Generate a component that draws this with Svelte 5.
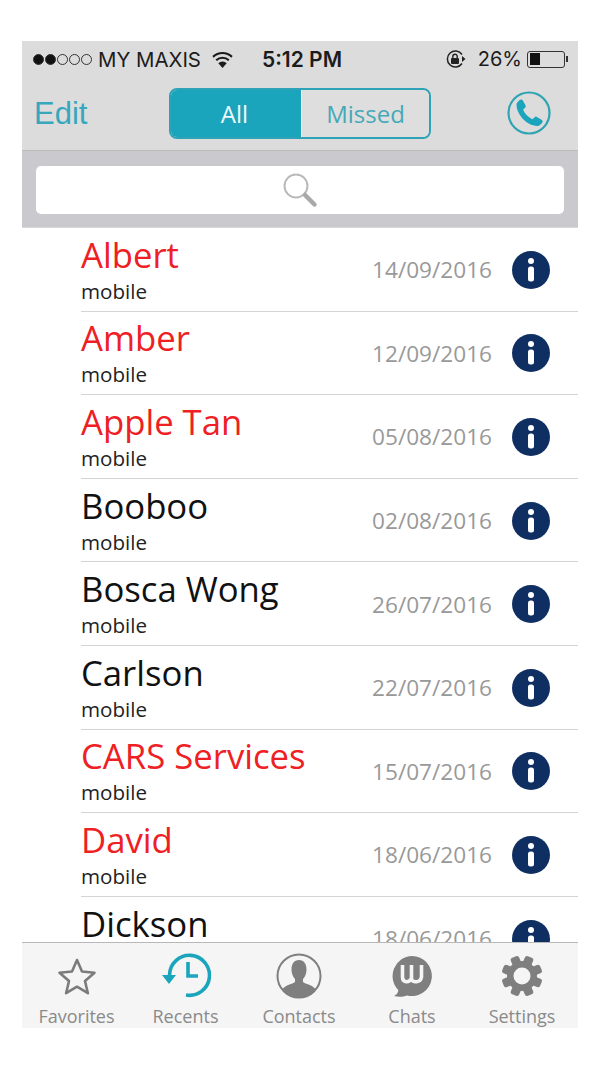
<script>
  const rows = [
    { name: 'Albert', date: '14/09/2016', missed: true },
    { name: 'Amber', date: '12/09/2016', missed: true },
    { name: 'Apple Tan', date: '05/08/2016', missed: true },
    { name: 'Booboo', date: '02/08/2016', missed: false },
    { name: 'Bosca Wong', date: '26/07/2016', missed: false },
    { name: 'Carlson', date: '22/07/2016', missed: false },
    { name: 'CARS Services', date: '15/07/2016', missed: true },
    { name: 'David', date: '18/06/2016', missed: true },
    { name: 'Dickson', date: '18/06/2016', missed: false }
  ];
  const teeth = [22.5, 67.5, 112.5, 157.5, 202.5, 247.5, 292.5, 337.5];
</script>

<div class="phone">
  <header class="nav">
    <div class="status">
      <span class="dots">
        <i class="on"></i><i class="on"></i><i></i><i></i><i></i>
      </span>
      <span class="carrier">MY MAXIS</span>
      <svg class="wifi" viewBox="0 0 20 16" width="21" height="17">
        <path d="M1 5.500a13 13 0 0 1 18 0M4 8.800a8.600 8.600 0 0 1 12 0" fill="none" stroke="#1c1c1c" stroke-width="2"/>
        <path d="M10 16l-4-4.400a5.600 5.600 0 0 1 8 0z" fill="#1c1c1c"/>
      </svg>
      <span class="time">5:12 PM</span>
      <span class="spacer"></span>
      <svg class="lock" viewBox="0 0 22 20" width="22" height="20">
        <path d="M17 5.500a8 8 0 1 0 0 9" fill="none" stroke="#222" stroke-width="1.500"/>
        <path d="M17 7l3.500 3-3.500 3z" fill="#222"/>
        <rect x="6" y="9" width="8" height="6" rx="1" fill="#222"/>
        <path d="M7.800 9V7.400a2.200 2.200 0 0 1 4.400 0V9" fill="none" stroke="#222" stroke-width="1.400"/>
      </svg>
      <span class="pct">26%</span>
      <span class="battery"><span class="level"></span></span>
      <span class="nub"></span>
    </div>
    <div class="bar">
      <span class="edit">Edit</span>
      <div class="segment">
        <span class="seg active">All</span>
        <span class="seg">Missed</span>
      </div>
      <svg class="call" viewBox="0 0 44 44" width="44" height="44">
        <circle cx="22" cy="22" r="20.500" fill="none" stroke="#2ea3b2" stroke-width="2.200"/>
        <path d="M9.500 13.500c0-1.500 3-5 4.500-5 1 0 1.600.5 2 1.300l2.600 4.700c.4 1 .2 1.700-.5 2.300l-2 1.700c1.500 4 5.500 8 9.500 9.700l2-2c.7-.7 1.500-.8 2.300-.3l4.700 2.800c.8.500 1.200 1.200 1 2-.5 1.800-3.500 4.300-5.300 4.300C19 34.500 9.500 23 9.500 13.500z" fill="#1aa5bd"/>
      </svg>
    </div>
  </header>

  <div class="search">
    <div class="field">
      <svg viewBox="0 0 36 36" width="36" height="36">
        <circle cx="14" cy="14" r="11.500" fill="none" stroke="#b9b9b9" stroke-width="2"/>
        <path d="M23 23l9.500 9.500" stroke="#a9a9a9" stroke-width="4.500" stroke-linecap="round"/>
      </svg>
    </div>
  </div>

  <div class="list">
    {#each rows as row}
      <div class="row">
        <div class="who">
          <div class="name" class:missed={row.missed}>{row.name}</div>
          <div class="kind">mobile</div>
        </div>
        <span class="date">{row.date}</span>
        <svg class="info" viewBox="0 0 38 38" width="38" height="38">
          <circle cx="19" cy="19" r="19" fill="#0f2f63"/>
          <circle cx="19" cy="10" r="3" fill="#fff"/>
          <rect x="16" y="15.500" width="6" height="15" rx="2.500" fill="#fff"/>
        </svg>
      </div>
    {/each}
  </div>

  <nav class="tabs">
    <div class="tab">
      <div class="icon">
        <svg viewBox="0 0 40 38" width="40" height="38">
          <path d="M20 3l5 11.500 12.500 1.200-9.500 8.300 2.900 12.200L20 29.700 9.100 36.200 12 24 2.500 15.700 15 14.500z" fill="none" stroke="#7b7b7b" stroke-width="2.600" stroke-linejoin="round"/>
        </svg>
      </div>
      <span>Favorites</span>
    </div>
    <div class="tab">
      <div class="icon">
        <svg viewBox="0 0 50 46" width="50" height="46">
          <path d="M8.500 22A20 20 0 1 1 25 42" fill="none" stroke="#1aa5bd" stroke-width="3.600"/>
          <path d="M1 22h14l-7 9z" fill="#1aa5bd"/>
          <path d="M27 9v14h10" fill="none" stroke="#1aa5bd" stroke-width="3.600"/>
        </svg>
      </div>
      <span>Recents</span>
    </div>
    <div class="tab">
      <div class="icon">
        <svg viewBox="0 0 46 46" width="46" height="46">
          <circle cx="23" cy="23" r="21.500" fill="none" stroke="#7f7f7f" stroke-width="2"/>
          <path d="M23 7c5 0 7.500 4 7.500 9.500 0 4-1.500 7.500-3.500 9.500v3c2.500 2 9.500 3 12.500 7a20 20 0 0 1-33 0c3-4 10-5 12.500-7v-3c-2-2-3.500-5.500-3.500-9.500C15.500 11 18 7 23 7z" fill="#7f7f7f"/>
        </svg>
      </div>
      <span>Contacts</span>
    </div>
    <div class="tab">
      <div class="icon">
        <svg viewBox="0 0 42 42" width="42" height="42">
          <path d="M21 1a20 20 0 1 1-5 39.400C12 42 7 42 3 41c3-1.500 4.200-3.500 4.300-6A20 20 0 0 1 21 1z" fill="#7f7f7f"/>
          <path d="M11.500 10v12c0 6 6.500 6 8.500 2 2 4 9.500 4 10.500-2V10M20.500 10v14" fill="none" stroke="#f5f5f5" stroke-width="3.600"/>
        </svg>
      </div>
      <span>Chats</span>
    </div>
    <div class="tab">
      <div class="icon">
        <svg viewBox="0 0 42 42" width="42" height="42">
          <circle cx="21" cy="21" r="15" fill="#7f7f7f"/>
          {#each teeth as angle}
            <rect x="16.500" y="0.500" width="9" height="12" rx="2.500" fill="#7f7f7f" transform="rotate({angle} 21 21)"/>
          {/each}
          <circle cx="21" cy="21" r="8.500" fill="#f5f5f5"/>
        </svg>
      </div>
      <span>Settings</span>
    </div>
  </nav>
</div>

<style>
  :global(body) {
    margin: 0;
    background: #fff;
  }

  .phone {
    width: 556px;
    height: 987px;
    margin: 41px 22px 0;
    display: flex;
    flex-direction: column;
    font-family: "Open Sans", sans-serif;
    overflow: hidden;
  }

  .nav {
    height: 110px;
    flex: none;
    background: #dcdcdc;
    border-bottom: 1px solid #bcbcbc;
    box-sizing: border-box;
  }

  .status {
    height: 36px;
    display: flex;
    align-items: center;
    padding: 0 10px 0 11px;
    color: #1c1c1c;
    font-family: "Inter", sans-serif;
    font-size: 20.400px;
  }

  .dots {
    display: flex;
    gap: 1px;
    margin-right: 6px;
  }

  .dots i {
    width: 11px;
    height: 11px;
    box-sizing: border-box;
    border-radius: 50%;
    border: 1px solid #333;
  }

  .dots i.on {
    background: #111;
  }

  .wifi {
    margin-left: 11px;
  }

  .time {
    margin-left: 29px;
    font-weight: 600;
    font-size: 21px;
  }

  .spacer {
    flex: 1;
  }

  .pct {
    margin-left: 11px;
    font-size: 20px;
  }

  .battery {
    width: 38px;
    height: 17px;
    margin-left: 5px;
    box-sizing: border-box;
    border: 1.500px solid #333;
    border-radius: 3px;
    padding: 1.500px;
    display: block;
  }

  .level {
    display: block;
    width: 10px;
    height: 100%;
    background: #111;
  }

  .nub {
    width: 2px;
    height: 6px;
    margin-left: 1px;
    background: #333;
  }

  .bar {
    height: 73px;
    display: grid;
    grid-template-columns: 147px 262px 1fr;
    align-items: center;
  }

  .edit {
    padding-left: 12px;
    font-family: "Liberation Sans", sans-serif;
    font-size: 31px;
    color: #36a7bd;
  }

  .segment {
    height: 51px;
    display: grid;
    grid-template-columns: 130px 1fr;
    box-sizing: border-box;
    border: 2px solid #2ea3b8;
    border-radius: 8px;
    overflow: hidden;
  }

  .seg {
    display: flex;
    align-items: center;
    justify-content: center;
    font-size: 24px;
    color: #45a9b8;
    background: #dedede;
    border-left: 1px solid #eef6f7;
  }

  .seg.active {
    background: #1aa5bd;
    color: #f2f8f9;
    border-left: 0;
    padding-right: 3px;
  }

  .call {
    justify-self: end;
    margin-right: 27px;
    transform: translateY(-1px);
  }

  .search {
    height: 77px;
    flex: none;
    box-sizing: border-box;
    padding: 15px 14px 0;
    background: #c9c9ce;
    border-bottom: 1px solid #d8d8d8;
  }

  .field {
    height: 48px;
    background: #fff;
    border-radius: 5px;
    display: flex;
    align-items: center;
    justify-content: center;
  }

  .list {
    flex: 1;
    min-height: 0;
    overflow: hidden;
    background: #fff;
  }

  .row {
    height: 83.600px;
    box-sizing: border-box;
    margin-left: 59px;
    padding-right: 28px;
    display: flex;
    align-items: center;
    border-bottom: 1px solid #d4d4d4;
  }

  .who {
    flex: 1;
    min-width: 0;
  }

  .name {
    font-size: 34.700px;
    line-height: 38px;
    color: #111;
    margin-top: 2px;
  }

  .name.missed {
    color: #ee2024;
  }

  .kind {
    font-size: 20.600px;
    line-height: 28px;
    margin-top: 3px;
    color: #222;
  }

  .date {
    margin-right: 20px;
    margin-top: 1px;
    font-size: 22.600px;
    color: #999;
  }

  .info {
    margin-top: 1px;
  }

  .tabs {
    height: 86px;
    flex: none;
    display: grid;
    grid-template-columns: 109px 109px 118px 108px 112px;
    box-sizing: border-box;
    padding-top: 10px;
    background: #f5f5f5;
    border-top: 1px solid #b8b8b8;
  }

  .tab {
    display: flex;
    flex-direction: column;
    align-items: center;
    gap: 5px;
    color: #8a8a8a;
    font-size: 18px;
    line-height: 24px;
  }

  .icon {
    height: 46px;
    display: flex;
    align-items: center;
  }
</style>
